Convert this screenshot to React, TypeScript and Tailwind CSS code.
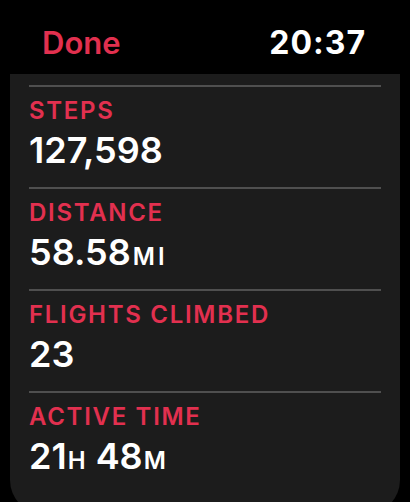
const rows = [
  { label: "STEPS", value: <>127,598</> },
  {
    label: "DISTANCE",
    value: (
      <>
        58.58<span className="text-[24px] font-semibold tracking-[3px] ml-[2px]">MI</span>
      </>
    ),
  },
  { label: "FLIGHTS CLIMBED", value: <>23</> },
  {
    label: "ACTIVE TIME",
    value: (
      <>
        21<span className="text-[24px] font-semibold tracking-[1px] ml-[1px]">H</span> 48
        <span className="text-[24px] font-semibold ml-[1px]">M</span>
      </>
    ),
  },
];

export default function App() {
  return (
    <div className="w-[410px] h-[502px] bg-black flex flex-col overflow-hidden font-['Inter',sans-serif]">
      <div className="h-[74px] flex-none flex items-start justify-between pl-[42px] pr-[44px] pt-[24px]">
        <span className="text-[31px] font-semibold text-[#e2304f] leading-[38px]">Done</span>
        <span className="text-[32px] font-bold text-white leading-[38px] tracking-[1px]">20:37</span>
      </div>
      <div className="flex-none h-[440px] mx-[10px] bg-[#1c1c1c] rounded-b-[34px] px-[19px] pt-[11px]">
        {rows.map((r) => (
          <div key={r.label} className="h-[102px] border-t-2 border-[#4f4f4f] pt-[10px]">
            <div className="text-[24px] font-semibold text-[#e2304f] leading-[28px] tracking-[1.7px]">
              {r.label}
            </div>
            <div className="text-[36px] font-semibold text-white leading-[42px] mt-[4px]">{r.value}</div>
          </div>
        ))}
      </div>
    </div>
  );
}
